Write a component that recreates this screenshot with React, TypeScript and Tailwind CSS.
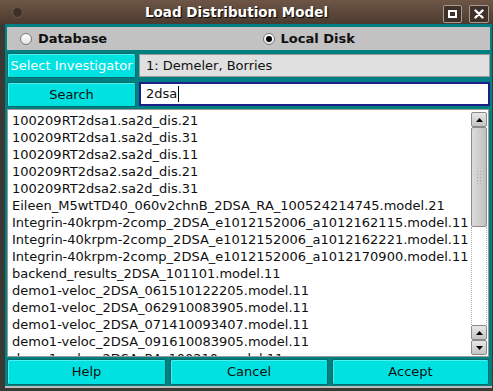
import React from "react";

const items = [
  "100209RT2dsa1.sa2d_dis.21",
  "100209RT2dsa1.sa2d_dis.31",
  "100209RT2dsa2.sa2d_dis.11",
  "100209RT2dsa2.sa2d_dis.21",
  "100209RT2dsa2.sa2d_dis.31",
  "Eileen_M5wtTD40_060v2chnB_2DSA_RA_100524214745.model.21",
  "Integrin-40krpm-2comp_2DSA_e1012152006_a1012162115.model.11",
  "Integrin-40krpm-2comp_2DSA_e1012152006_a1012162221.model.11",
  "Integrin-40krpm-2comp_2DSA_e1012152006_a1012170900.model.11",
  "backend_results_2DSA_101101.model.11",
  "demo1-veloc_2DSA_061510122205.model.11",
  "demo1-veloc_2DSA_062910083905.model.11",
  "demo1-veloc_2DSA_071410093407.model.11",
  "demo1-veloc_2DSA_091610083905.model.11",
  "demo1-veloc_2DSA_RA_100210.model.11",
];

const font = { fontFamily: '"DejaVu Sans", "Liberation Sans", sans-serif' };

function Btn({ children, white }: { children: React.ReactNode; white?: boolean }) {
  return (
    <div
      className={
        "flex items-center justify-center rounded-[2px] border border-[#0a6a6a] bg-[#00e2e2] shadow-[inset_1px_1px_0_#4cf0f0] text-[13px] " +
        (white ? "text-white" : "text-[#101010]")
      }
    >
      {children}
    </div>
  );
}

function Arrow({ up }: { up?: boolean }) {
  return (
    <div className="w-[16px] h-[15px] shrink-0 rounded-[2px] border border-[#8a8a8a] bg-gradient-to-b from-[#e8e8e8] to-[#c4c4c4] flex items-center justify-center">
      <svg width="7" height="4" viewBox="0 0 7 4">
        {up ? <polygon points="0,4 7,4 3.5,0" fill="#000" /> : <polygon points="0,0 7,0 3.5,4" fill="#000" />}
      </svg>
    </div>
  );
}

export default function App() {
  return (
    <div className="w-[493px] h-[391px] bg-[#3a3936] flex flex-col overflow-hidden" style={font}>
      {/* Title bar */}
      <div className="h-[24px] shrink-0 bg-gradient-to-b from-[#6e5646] to-[#4c3b2f] flex items-center relative">
        <div className="absolute left-[12px] top-[7px] w-[11px] h-[11px] rounded-full bg-[#3d3029] border border-[#6e5a4c]" />
        <div className="flex-1 text-center text-white font-bold text-[13.5px] [text-shadow:1px_1px_1px_#000] pr-[20px]">
          Load Distribution Model
        </div>
        <div className="absolute right-[31px] top-[5px] w-[19px] h-[18px] rounded-[2px] border border-[#a89a90] bg-[#3e312a] flex items-center justify-center">
          <div className="w-[9px] h-[8px] border-[2px] border-white" />
        </div>
        <div className="absolute right-[4px] top-[5px] w-[20px] h-[18px] rounded-[2px] border border-[#a89a90] bg-[#3e312a] flex items-center justify-center">
          <svg width="10" height="10" viewBox="0 0 10 10">
            <path d="M1.5 1.5 L8.5 8.5 M8.5 1.5 L1.5 8.5" stroke="#fff" strokeWidth="2.4" strokeLinecap="round" />
          </svg>
        </div>
      </div>

      <div className="h-[367px] shrink-0 flex pl-[5px] pr-[1px]">
        <div className="flex-1 flex flex-col bg-[#008080]">
          <div className="h-[362px] shrink-0 flex flex-col px-[2px] pt-[3px]">
            {/* Radio row */}
            <div className="h-[23px] shrink-0 grid grid-cols-2 bg-[#c2c2c2]">
              <div className="flex items-center pl-[13px] gap-[6px]">
                <div className="w-[12px] h-[12px] rounded-full border border-[#7a7a7a] bg-gradient-to-b from-[#ffffff] to-[#e4e4e4]" />
                <span className="font-bold text-[13px] text-[#101010]">Database</span>
              </div>
              <div className="flex items-center pl-[14px] gap-[6px]">
                <div className="w-[12px] h-[12px] rounded-full border border-[#7a7a7a] bg-gradient-to-b from-[#ffffff] to-[#e4e4e4] flex items-center justify-center">
                  <div className="w-[6px] h-[6px] rounded-full bg-black" />
                </div>
                <span className="font-bold text-[13px] text-[#101010]">Local Disk</span>
              </div>
            </div>

            {/* Investigator row */}
            <div className="h-[25px] shrink-0 mt-[3px] grid grid-cols-[129px_1fr] gap-[3px]">
              <Btn white>Select Investigator</Btn>
              <div className="my-[1px] border border-[#9a9a9a] bg-[#e0e0e0] flex items-center pl-[6px] text-[13px] text-[#101010]">
                1: Demeler, Borries
              </div>
            </div>

            {/* Search row */}
            <div className="h-[25px] shrink-0 mt-[4px] grid grid-cols-[129px_1fr] gap-[3px]">
              <Btn>Search</Btn>
              <div className="mb-[1px] border-[2px] border-[#1e1e8a] bg-white flex items-center pl-[5px] text-[13px] text-[#101010]">
                2dsa<span className="inline-block w-[1px] h-[16px] bg-black ml-[1px]" />
              </div>
            </div>

            {/* List */}
            <div className="h-[248px] shrink-0 mt-[2px] mr-[1px] border border-[#9a9a9a] bg-white flex overflow-hidden">
              <div className="flex-1 pl-[4px] pt-[2px] overflow-hidden">
                {items.map((t) => (
                  <div key={t} className="h-[17px] leading-[17px] text-[13px] text-[#101010] whitespace-nowrap">
                    {t}
                  </div>
                ))}
              </div>
              <div className="w-[17px] shrink-0 flex flex-col pt-[2px] pb-[1px] pr-[1px]">
                <Arrow up />
                <div className="w-[16px] h-[100px] shrink-0 rounded-[2px] border border-[#8a8a8a] bg-gradient-to-r from-[#dcdcdc] via-[#cfcfcf] to-[#c0c0c0] flex items-center justify-center">
                  <div className="w-[6px] h-[14px] [background-image:radial-gradient(#a8a8a8_0.8px,transparent_1px)] [background-size:3px_3px]" />
                </div>
                <div className="flex-1 border-x border-dotted border-[#b0b0b0]" />
                <Arrow up />
                <Arrow />
              </div>
            </div>

            {/* Buttons */}
            <div className="h-[26px] shrink-0 mt-[2px] mr-[1px] grid grid-cols-[159px_158px_1fr] gap-[4px]">
              <Btn>Help</Btn>
              <Btn>Cancel</Btn>
              <Btn>Accept</Btn>
            </div>
          </div>
          <div className="h-[2px] bg-[#bdbdbd] shrink-0" />
          <div className="h-[3px] shrink-0 bg-[#3a3936]" />
        </div>
      </div>
    </div>
  );
}
